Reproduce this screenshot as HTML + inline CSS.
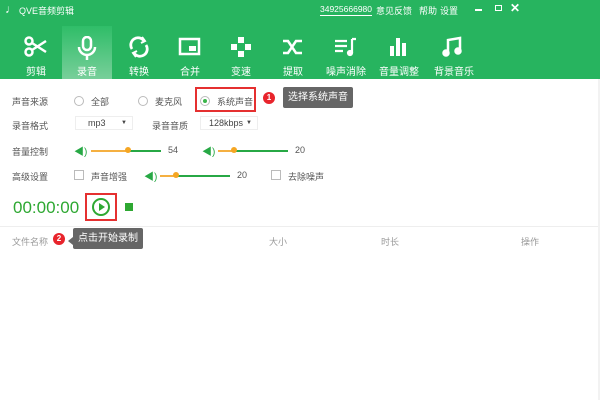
<!DOCTYPE html>
<html><head><meta charset="utf-8"><style>
*{margin:0;padding:0;box-sizing:border-box}
body{width:600px;height:400px;overflow:hidden;background:#fff;font-family:"Liberation Sans","Noto Sans CJK SC",sans-serif;position:relative;font-size:9px;color:#555}
.a{position:absolute;white-space:nowrap}
#hd{position:absolute;left:0;top:0;width:600px;height:79px;background:#27b45f}
.w{color:#fff}
.tab{position:absolute;top:26px;width:50px;height:53px;text-align:center;color:#fff;font-size:10px}
.tab svg{position:absolute;left:13px;top:10px}
.tab span{position:absolute;left:0;right:0;top:37px}
.sel{background:linear-gradient(#2fbd68,#78cf9a)}
.radio{position:absolute;width:10px;height:10px;border:1px solid #bbb;border-radius:50%}
.chk{position:absolute;width:10px;height:10px;border:1px solid #bbb}
.sl{position:absolute;height:2px;background:#27a845}
.dd{position:absolute;height:14px;border:1px solid #eee;font-size:9px;color:#444;padding-left:12px;line-height:12px}
.tip{position:absolute;background:#666;color:#fff;font-size:10px;border-radius:2px;padding:0 5px;height:21px;line-height:21px}
.num{position:absolute;width:12px;height:12px;border-radius:50%;background:#e8242c;color:#fff;font-size:8px;text-align:center;line-height:12px;font-weight:bold}
</style></head><body>
<div id="hd">
<div class="a w" style="left:5px;top:2px;font-size:12px">♩</div>
<div class="a w" style="left:19px;top:4px;font-size:9px">QVE音频剪辑</div>
<div class="a w" style="left:320px;top:4px;font-size:8.5px;border-bottom:1px solid #fff;line-height:11px">34925666980</div>
<div class="a w" style="left:376px;top:4px;font-size:9px">意见反馈</div>
<div class="a w" style="left:419px;top:4px;font-size:9px">帮助</div>
<div class="a w" style="left:440px;top:4px;font-size:9px">设置</div>
<div class="a" style="left:475px;top:9px;width:7px;height:1.5px;background:#fff"></div>
<div class="a" style="left:495px;top:5px;width:7px;height:6px;border:1px solid #fff"></div>
<div class="a w" style="left:510px;top:1px;font-size:12px;font-weight:bold">✕</div>

<div class="tab" style="left:11px"><svg width="24" height="22" viewBox="0 0 24 22" fill="none" stroke="#fff" stroke-width="2.5"><circle cx="5" cy="5" r="3.5"/><circle cx="5" cy="16" r="3.5"/><path d="M8 7L22 16M8 14L22 5"/></svg><span>剪辑</span></div>
<div class="tab sel" style="left:62px"><svg width="24" height="24" viewBox="0 0 24 24" fill="none" stroke="#fff" stroke-width="2.5"><rect x="8" y="1" width="8" height="13" rx="4"/><path d="M4 11a8 8 0 0016 0M12 19v5"/></svg><span>录音</span></div>
<div class="tab" style="left:114px"><svg width="24" height="22" viewBox="0 0 24 22" fill="none" stroke="#fff" stroke-width="2.8"><path d="M5 13A7 7 0 0117 5M19 9A7 7 0 017 17"/><path d="M15 1l3 4-4 2M9 21l-3-4 4-2" stroke-width="2"/></svg><span>转换</span></div>
<div class="tab" style="left:165px"><svg width="24" height="22" viewBox="0 0 24 22"><rect x="2" y="3" width="19" height="15" fill="none" stroke="#fff" stroke-width="2.5"/><rect x="11" y="10" width="7" height="5" fill="#fff"/></svg><span>合并</span></div>
<div class="tab" style="left:216px"><svg width="24" height="22" viewBox="0 0 24 22" fill="#fff"><rect x="9" y="1" width="6" height="6"/><rect x="2" y="8" width="6" height="6"/><rect x="16" y="8" width="6" height="6"/><rect x="9" y="15" width="6" height="6"/></svg><span>变速</span></div>
<div class="tab" style="left:268px"><svg width="24" height="22" viewBox="0 0 24 22" fill="none" stroke="#fff" stroke-width="2.5"><path d="M2 5h5l8 12h6M2 17h5l8-12h6"/></svg><span>提取</span></div>
<div class="tab" style="left:320px;width:52px"><svg width="24" height="22" viewBox="0 0 24 22" fill="none" stroke="#fff" stroke-width="2.2"><path d="M2 5h12M2 10h12M2 15h8M19 3v14M19 3h4"/><circle cx="17" cy="17" r="2" fill="#fff"/></svg><span>噪声消除</span></div>
<div class="tab" style="left:373px;width:52px"><svg width="24" height="22" viewBox="0 0 24 22" fill="#fff"><rect x="4" y="10" width="4" height="10"/><rect x="10" y="2" width="4" height="18"/><rect x="16" y="7" width="4" height="13"/></svg><span>音量调整</span></div>
<div class="tab" style="left:427px;width:54px"><svg width="24" height="22" viewBox="0 0 24 22" fill="none" stroke="#fff" stroke-width="2.5"><path d="M8 17V4l12-2v13"/><circle cx="6" cy="17" r="2.5" fill="#fff"/><circle cx="18" cy="15" r="2.5" fill="#fff"/></svg><span>背景音乐</span></div>
</div>

<div class="a" style="left:12px;top:95px">声音来源</div>
<div class="radio" style="left:74px;top:96px"></div><div class="a" style="left:91px;top:95px">全部</div>
<div class="radio" style="left:138px;top:96px"></div><div class="a" style="left:155px;top:95px">麦克风</div>
<div class="a" style="left:195px;top:87px;width:61px;height:25px;border:2px solid #e53030"></div>
<div class="radio" style="left:200px;top:96px"></div><div class="a" style="left:203px;top:99px;width:4px;height:4px;border-radius:50%;background:#3ab54a"></div>
<div class="a" style="left:217px;top:95px">系统声音</div>
<div class="num" style="left:263px;top:92px">1</div>
<div class="tip" style="left:283px;top:87px">选择系统声音</div>

<div class="a" style="left:12px;top:119px">录音格式</div>
<div class="dd" style="left:75px;top:116px;width:58px">mp3<span style="position:absolute;right:5px;font-size:6px">▼</span></div>
<div class="a" style="left:152px;top:119px">录音音质</div>
<div class="dd" style="left:200px;top:116px;width:58px;padding-left:8px">128kbps<span style="position:absolute;right:5px;font-size:6px">▼</span></div>

<div class="a" style="left:12px;top:145px">音量控制</div>
<div class="a" style="left:74px;top:143px;color:#27a845;font-size:10px">◀)</div>
<div class="sl" style="left:91px;top:150px;width:70px"></div><div class="sl" style="left:91px;top:150px;width:38px;background:#f5b041"></div>
<div class="a" style="left:125px;top:147px;width:6px;height:6px;border-radius:50%;background:#f5a623"></div>
<div class="a" style="left:168px;top:145px">54</div>
<div class="a" style="left:202px;top:143px;color:#27a845;font-size:10px">◀)</div>
<div class="sl" style="left:218px;top:150px;width:70px"></div><div class="sl" style="left:218px;top:150px;width:16px;background:#f5b041"></div>
<div class="a" style="left:231px;top:147px;width:6px;height:6px;border-radius:50%;background:#f5a623"></div>
<div class="a" style="left:295px;top:145px">20</div>

<div class="a" style="left:12px;top:170px">高级设置</div>
<div class="chk" style="left:74px;top:170px"></div><div class="a" style="left:91px;top:170px">声音增强</div>
<div class="a" style="left:144px;top:168px;color:#27a845;font-size:10px">◀)</div>
<div class="sl" style="left:160px;top:175px;width:70px"></div><div class="sl" style="left:160px;top:175px;width:16px;background:#f5b041"></div>
<div class="a" style="left:173px;top:172px;width:6px;height:6px;border-radius:50%;background:#f5a623"></div>
<div class="a" style="left:237px;top:170px">20</div>
<div class="chk" style="left:271px;top:170px"></div><div class="a" style="left:288px;top:170px">去除噪声</div>

<div class="a" style="left:13px;top:198px;font-size:17px;color:#2ea832">00:00:00</div>
<div class="a" style="left:85px;top:193px;width:32px;height:28px;border:2px solid #e53030"></div>
<div class="a" style="left:92px;top:198px;width:18px;height:18px;border:2px solid #2ea832;border-radius:50%"></div>
<div class="a" style="left:99px;top:203px;width:0;height:0;border-left:6px solid #2ea832;border-top:4px solid transparent;border-bottom:4px solid transparent"></div>
<div class="a" style="left:125px;top:203px;width:8px;height:8px;background:#2ea832"></div>

<div class="a" style="left:0;top:226px;width:600px;height:1px;background:#eee"></div>
<div class="a" style="left:12px;top:235px;color:#999">文件名称</div>
<div class="num" style="left:53px;top:233px">2</div>
<div class="a" style="left:68px;top:237px;width:0;height:0;border-right:5px solid #666;border-top:4px solid transparent;border-bottom:4px solid transparent"></div>
<div class="tip" style="left:73px;top:228px">点击开始录制</div>
<div class="a" style="left:269px;top:235px;color:#999">大小</div>
<div class="a" style="left:381px;top:235px;color:#999">时长</div>
<div class="a" style="left:521px;top:235px;color:#999">操作</div>
<div class="a" style="left:598px;top:79px;width:2px;height:321px;background:#f2f2f2"></div>
</body></html>
